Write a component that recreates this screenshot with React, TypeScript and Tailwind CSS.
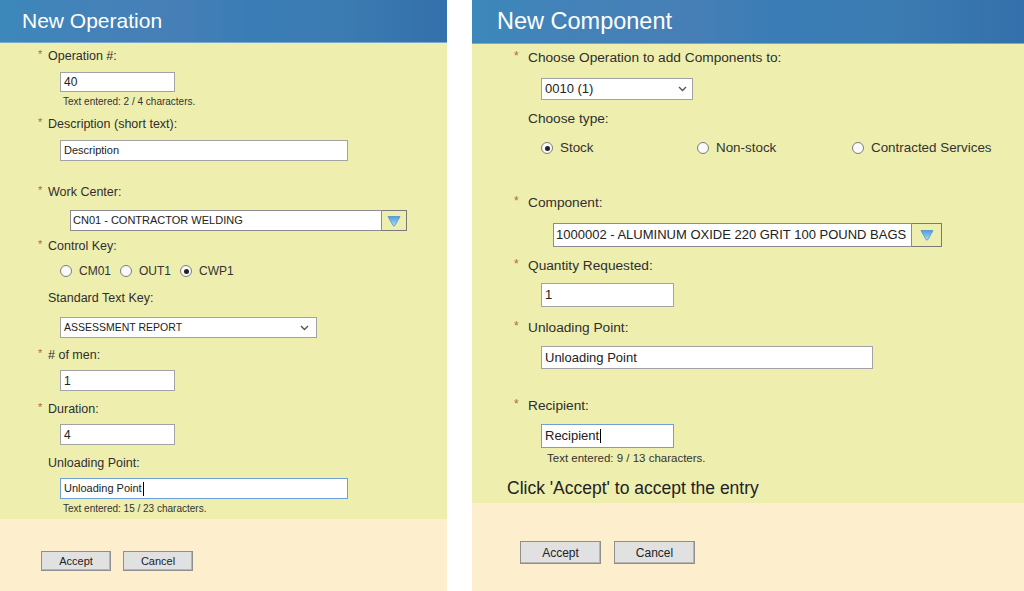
import React from 'react';

const font = "font-['Liberation_Sans',Arial,sans-serif]";

// small helpers for the form widgets
const Req = ({ on, size }: { on: boolean; size: 'sm' | 'lg' }) => (
  <span
    className={`${size === 'sm' ? 'w-[10px] text-[11px]' : 'w-[14px] text-[12px]'} self-start leading-none text-[#b0663a]`}
  >
    {on ? '*' : ''}
  </span>
);

const Label = ({
  text,
  req = true,
  size,
  className = '',
}: {
  text: string;
  req?: boolean;
  size: 'sm' | 'lg';
  className?: string;
}) => (
  <div
    className={`flex items-center text-[#2e2e2e] ${
      size === 'sm' ? 'pl-[38px] text-[12.5px] leading-[14px] h-[14px]' : 'pl-[42px] text-[13.7px] leading-[16px] h-[16px]'
    } ${className}`}
  >
    <Req on={req} size={size} />
    <span>{text}</span>
  </div>
);

const Caret = () => <span className="inline-block w-px h-[14px] bg-black ml-px" />;

const TextBox = ({
  value,
  className,
  focus = false,
  text = 'text-[11px]',
}: {
  value: string;
  className: string;
  focus?: boolean;
  text?: string;
}) => (
  <div
    className={`flex items-center bg-white border px-[3px] text-[#222] ${text} ${
      focus ? 'border-[#6e9fd6]' : 'border-[#a3a3a3]'
    } ${className}`}
  >
    <span>{value}</span>
    {focus && <Caret />}
  </div>
);

const Chevron = () => (
  <svg width="9" height="6" viewBox="0 0 9 6" className="shrink-0">
    <path d="M1 1l3.5 3.5L8 1" fill="none" stroke="#555" strokeWidth="1.4" />
  </svg>
);

const SelectBox = ({ value, className, text = 'text-[12px]' }: { value: string; className: string; text?: string }) => (
  <div
    className={`flex items-center justify-between bg-white border border-[#a3a3a3] pl-[3px] pr-[7px] text-[#222] ${text} ${className}`}
  >
    <span>{value}</span>
    <Chevron />
  </div>
);

const Tri = () => (
  <svg width="14" height="12" viewBox="0 0 14 12">
    <defs>
      <linearGradient id="tg" x1="0" y1="0" x2="0" y2="1">
        <stop offset="0" stopColor="#4c9ee0" />
        <stop offset="1" stopColor="#b3dcf8" />
      </linearGradient>
    </defs>
    <path d="M1 1.5h12L8 10.5q-1 1.3-2 0z" fill="url(#tg)" stroke="#4b94d2" strokeWidth="0.8" />
  </svg>
);

const Combo = ({
  value,
  inputW,
  btnW,
  h,
  ml,
  text,
}: {
  value: string;
  inputW: string;
  btnW: string;
  h: string;
  ml: string;
  text: string;
}) => (
  <div className={`flex ${h} ${ml}`}>
    <div className={`flex items-center bg-white border border-[#8c8c8c] px-[2px] text-[#222] ${text} ${inputW}`}>
      {value}
    </div>
    <div className={`flex items-center justify-center border border-l-0 border-[#7a7a7a] ${btnW}`}>
      <Tri />
    </div>
  </div>
);

const Radio = ({ checked, label, className = '' }: { checked?: boolean; label: string; className?: string }) => (
  <div className={`flex items-center ${className}`}>
    <span className="w-[12px] h-[12px] rounded-full border border-[#7c7c7c] bg-[#fafafa] flex items-center justify-center">
      {checked && <span className="w-[5px] h-[5px] rounded-full bg-[#222]" />}
    </span>
    <span className="ml-[7px]">{label}</span>
  </div>
);

const Btn = ({ label, className }: { label: string; className: string }) => (
  <div
    className={`flex items-center justify-center bg-[#e1e1e1] border border-[#8f8f8f] shadow-[inset_-1px_-1px_0_#b5b5b5] text-[#222] ${className}`}
  >
    {label}
  </div>
);

const header =
  'bg-[linear-gradient(90deg,#3c88bb_0%,#4382b8_18%,#467fb6_40%,#3a7db6_55%,#3b7cb2_75%,#3470ab_100%)] border-b border-[#79a9cc] text-white flex items-center';

export default function App() {
  return (
    <div className={`${font} w-[1024px] h-[591px] flex bg-white overflow-hidden`}>
      {/* New Operation */}
      <div className="w-[447px] h-full flex flex-col">
        <div className={`${header} h-[43px] pl-[22px] text-[21px]`}>New Operation</div>
        <div className="h-[476px] bg-[#eeeeaf] pt-[6px]">
          <Label size="sm" text="Operation #:" />
          <TextBox value="40" text="text-[12px]" className="ml-[60px] mt-[9px] w-[115px] h-[20px]" />
          <div className="ml-[63px] mt-[4px] text-[10px] leading-[11px] text-[#333]">Text entered: 2 / 4 characters.</div>

          <Label size="sm" text="Description (short text):" className="mt-[10px]" />
          <TextBox value="Description" className="ml-[60px] mt-[9px] w-[288px] h-[21px]" />

          <Label size="sm" text="Work Center:" className="mt-[24px]" />
          <Combo
            value="CN01 - CONTRACTOR WELDING"
            inputW="w-[312px]"
            btnW="w-[25px]"
            h="h-[21px] mt-[11px]"
            ml="ml-[70px]"
            text="text-[11px]"
          />

          <Label size="sm" text="Control Key:" className="mt-[8px]" />
          <div className="flex ml-[60px] mt-[11px] h-[14px] text-[12px] text-[#333]">
            <Radio label="CM01" className="w-[60px]" />
            <Radio label="OUT1" className="w-[60px]" />
            <Radio label="CWP1" checked />
          </div>

          <Label size="sm" req={false} text="Standard Text Key:" className="mt-[13px]" />
          <SelectBox value="ASSESSMENT REPORT" text="text-[10.5px]" className="ml-[60px] mt-[12px] w-[257px] h-[21px]" />

          <Label size="sm" text="# of men:" className="mt-[10px]" />
          <TextBox value="1" text="text-[12px]" className="ml-[60px] mt-[8px] w-[115px] h-[21px]" />

          <Label size="sm" text="Duration:" className="mt-[11px]" />
          <TextBox value="4" text="text-[12px]" className="ml-[60px] mt-[8px] w-[115px] h-[21px]" />

          <Label size="sm" req={false} text="Unloading Point:" className="mt-[11px]" />
          <TextBox value="Unloading Point" focus className="ml-[60px] mt-[8px] w-[288px] h-[21px]" />
          <div className="ml-[63px] mt-[4px] text-[10px] leading-[11px] text-[#333]">Text entered: 15 / 23 characters.</div>
        </div>
        <div className="flex-1 bg-[#fdeecd] pt-[32px] pl-[41px] flex gap-[12px] text-[11px]">
          <Btn label="Accept" className="w-[70px] h-[20px]" />
          <Btn label="Cancel" className="w-[70px] h-[20px]" />
        </div>
      </div>

      <div className="w-[25px]" />

      {/* New Component */}
      <div className="flex-1 h-full flex flex-col">
        <div className={`${header} h-[44px] pl-[25px] text-[23.5px]`}>New Component</div>
        <div className="h-[459px] bg-[#eeeeaf] pt-[6px]">
          <Label size="lg" text="Choose Operation to add Components to:" />
          <SelectBox value="0010 (1)" text="text-[13px]" className="ml-[69px] mt-[12px] w-[152px] h-[22px] !pr-[5px]" />

          <Label size="lg" req={false} text="Choose type:" className="mt-[11px]" />
          <div className="flex ml-[69px] mt-[13px] h-[16px] text-[13.4px] text-[#333]">
            <Radio label="Stock" checked className="w-[156px]" />
            <Radio label="Non-stock" className="w-[155px]" />
            <Radio label="Contracted Services" />
          </div>

          <Label size="lg" text="Component:" className="mt-[39px]" />
          <Combo
            value="1000002 - ALUMINUM OXIDE 220 GRIT 100 POUND BAGS"
            inputW="w-[359px]"
            btnW="w-[30px]"
            h="h-[24px] mt-[12px]"
            ml="ml-[81px]"
            text="text-[13px]"
          />

          <Label size="lg" text="Quantity Requested:" className="mt-[11px]" />
          <TextBox value="1" text="text-[13px]" className="ml-[69px] mt-[9px] w-[133px] h-[24px]" />

          <Label size="lg" text="Unloading Point:" className="mt-[13px]" />
          <TextBox value="Unloading Point" text="text-[13px]" className="ml-[69px] mt-[10px] w-[332px] h-[23px]" />

          <Label size="lg" text="Recipient:" className="mt-[29px]" />
          <TextBox value="Recipient" focus text="text-[13px]" className="ml-[69px] mt-[10px] w-[133px] h-[24px]" />
          <div className="ml-[75px] mt-[4px] text-[11.5px] leading-[12px] text-[#333]">Text entered: 9 / 13 characters.</div>

          <div className="ml-[35px] mt-[14px] text-[17.5px] leading-[21px] text-[#222]">Click 'Accept' to accept the entry</div>
        </div>
        <div className="flex-1 bg-[#fdeecd] pt-[38px] pl-[48px] flex gap-[13px] text-[12px]">
          <Btn label="Accept" className="w-[81px] h-[23px]" />
          <Btn label="Cancel" className="w-[81px] h-[23px]" />
        </div>
      </div>
    </div>
  );
}
